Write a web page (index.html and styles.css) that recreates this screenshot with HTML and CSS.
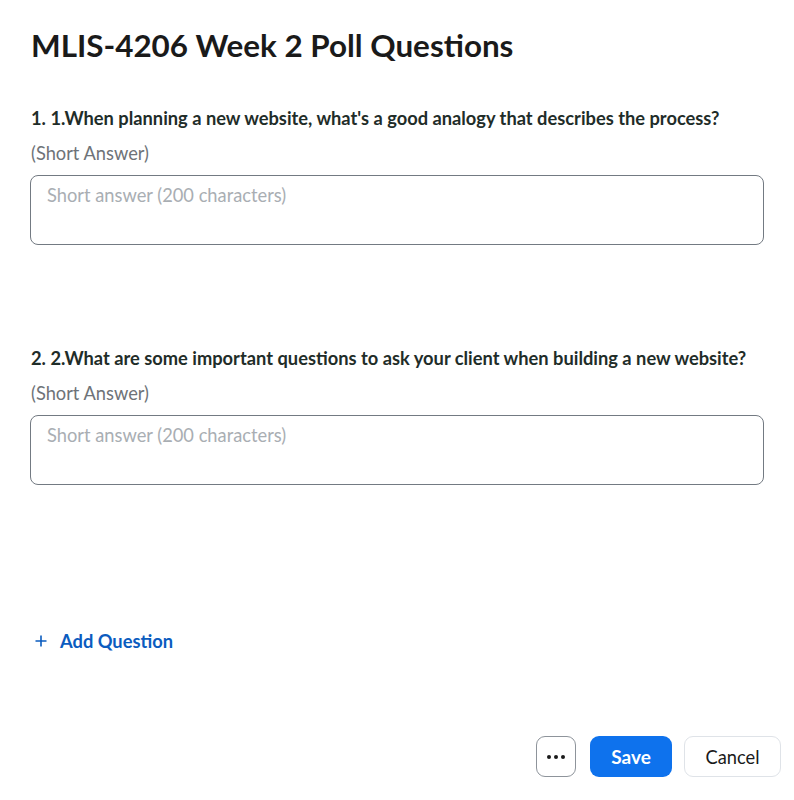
FILE: index.html
```html
<!DOCTYPE html>
<html>
<head>
<meta charset="utf-8">
<link rel="stylesheet" href="styles.css">
</head>
<body>
<div class="page">
  <h1 class="title">MLIS-4206 Week 2 Poll Questions</h1>
  <div class="question">
    <div class="q-text">1. 1.When planning a new website, what's a good analogy that describes the process?</div>
    <div class="q-type">(Short Answer)</div>
    <div class="answer">Short answer (200 characters)</div>
  </div>
  <div class="question">
    <div class="q-text">2. 2.What are some important questions to ask your client when building a new website?</div>
    <div class="q-type">(Short Answer)</div>
    <div class="answer">Short answer (200 characters)</div>
  </div>
  <div class="add">
    <svg class="plus" width="12" height="12" viewBox="0 0 12 12"><path d="M6 0.5V11.5M0.5 6H11.5" stroke="#0b5cbf" stroke-width="1.6" fill="none"/></svg>
    <span>Add Question</span>
  </div>
  <div class="footer">
    <button class="btn more"><span class="dot"></span><span class="dot"></span><span class="dot"></span></button>
    <button class="btn save">Save</button>
    <button class="btn cancel">Cancel</button>
  </div>
</div>
</body>
</html>
```
FILE: styles.css
```css
* { box-sizing: border-box; }
html, body { margin: 0; padding: 0; background: #fff; }
body { font-family: Lato, "Open Sans", sans-serif; }
.page {
  width: 794px;
  height: 800px;
  padding: 26px 30px 0 31px;
  display: flex;
  flex-direction: column;
}
.title {
  margin: 0;
  font-size: 31.4px;
  line-height: 38px;
  font-weight: 700;
  color: #1a1a1a;
}
.question {
  margin-top: 42px;
}
.question + .question { margin-top: 101px; }
.q-text {
  font-size: 18.3px;
  line-height: 24px;
  font-weight: 700;
  color: #1f2d29;
}
.q-type {
  margin-top: 11px;
  font-size: 18.3px;
  line-height: 24px;
  color: #6e7378;
}
.answer {
  margin-top: 10px;
  margin-left: -1px;
  width: 734px;
  height: 70px;
  border: 1px solid #737a82;
  border-radius: 8px;
  padding: 7px 16px;
  font-size: 18.3px;
  line-height: 24px;
  color: #a9aeb3;
}
.add {
  margin-top: 144px;
  display: flex;
  align-items: center;
  gap: 13px;
  padding-left: 4px;
  font-size: 18.3px;
  line-height: 24px;
  font-weight: 700;
  color: #0b5cbf;
}
.footer {
  margin-top: auto;
  margin-bottom: 23px;
  margin-right: -17px;
  display: flex;
  justify-content: flex-end;
  gap: 12px;
}
.btn {
  height: 41px;
  border-radius: 9px;
  font-family: Lato, sans-serif;
  font-size: 19px;
  font-weight: 700;
  padding: 0;
  cursor: pointer;
}
.more {
  width: 40px;
  background: #fff;
  border: 1px solid #8e949b;
  display: flex;
  align-items: center;
  justify-content: center;
  gap: 3px;
  margin-right: 2px;
}
.dot { width: 4px; height: 4px; border-radius: 50%; background: #1a1a1a; }
.save {
  width: 82px;
  background: #0e72ed;
  border: none;
  color: #fff;
}
.cancel {
  width: 97px;
  background: #fff;
  border: 1px solid #dfe3e8;
  color: #1a1a1a;
  font-size: 18.3px;
  font-weight: 400;
}
```
